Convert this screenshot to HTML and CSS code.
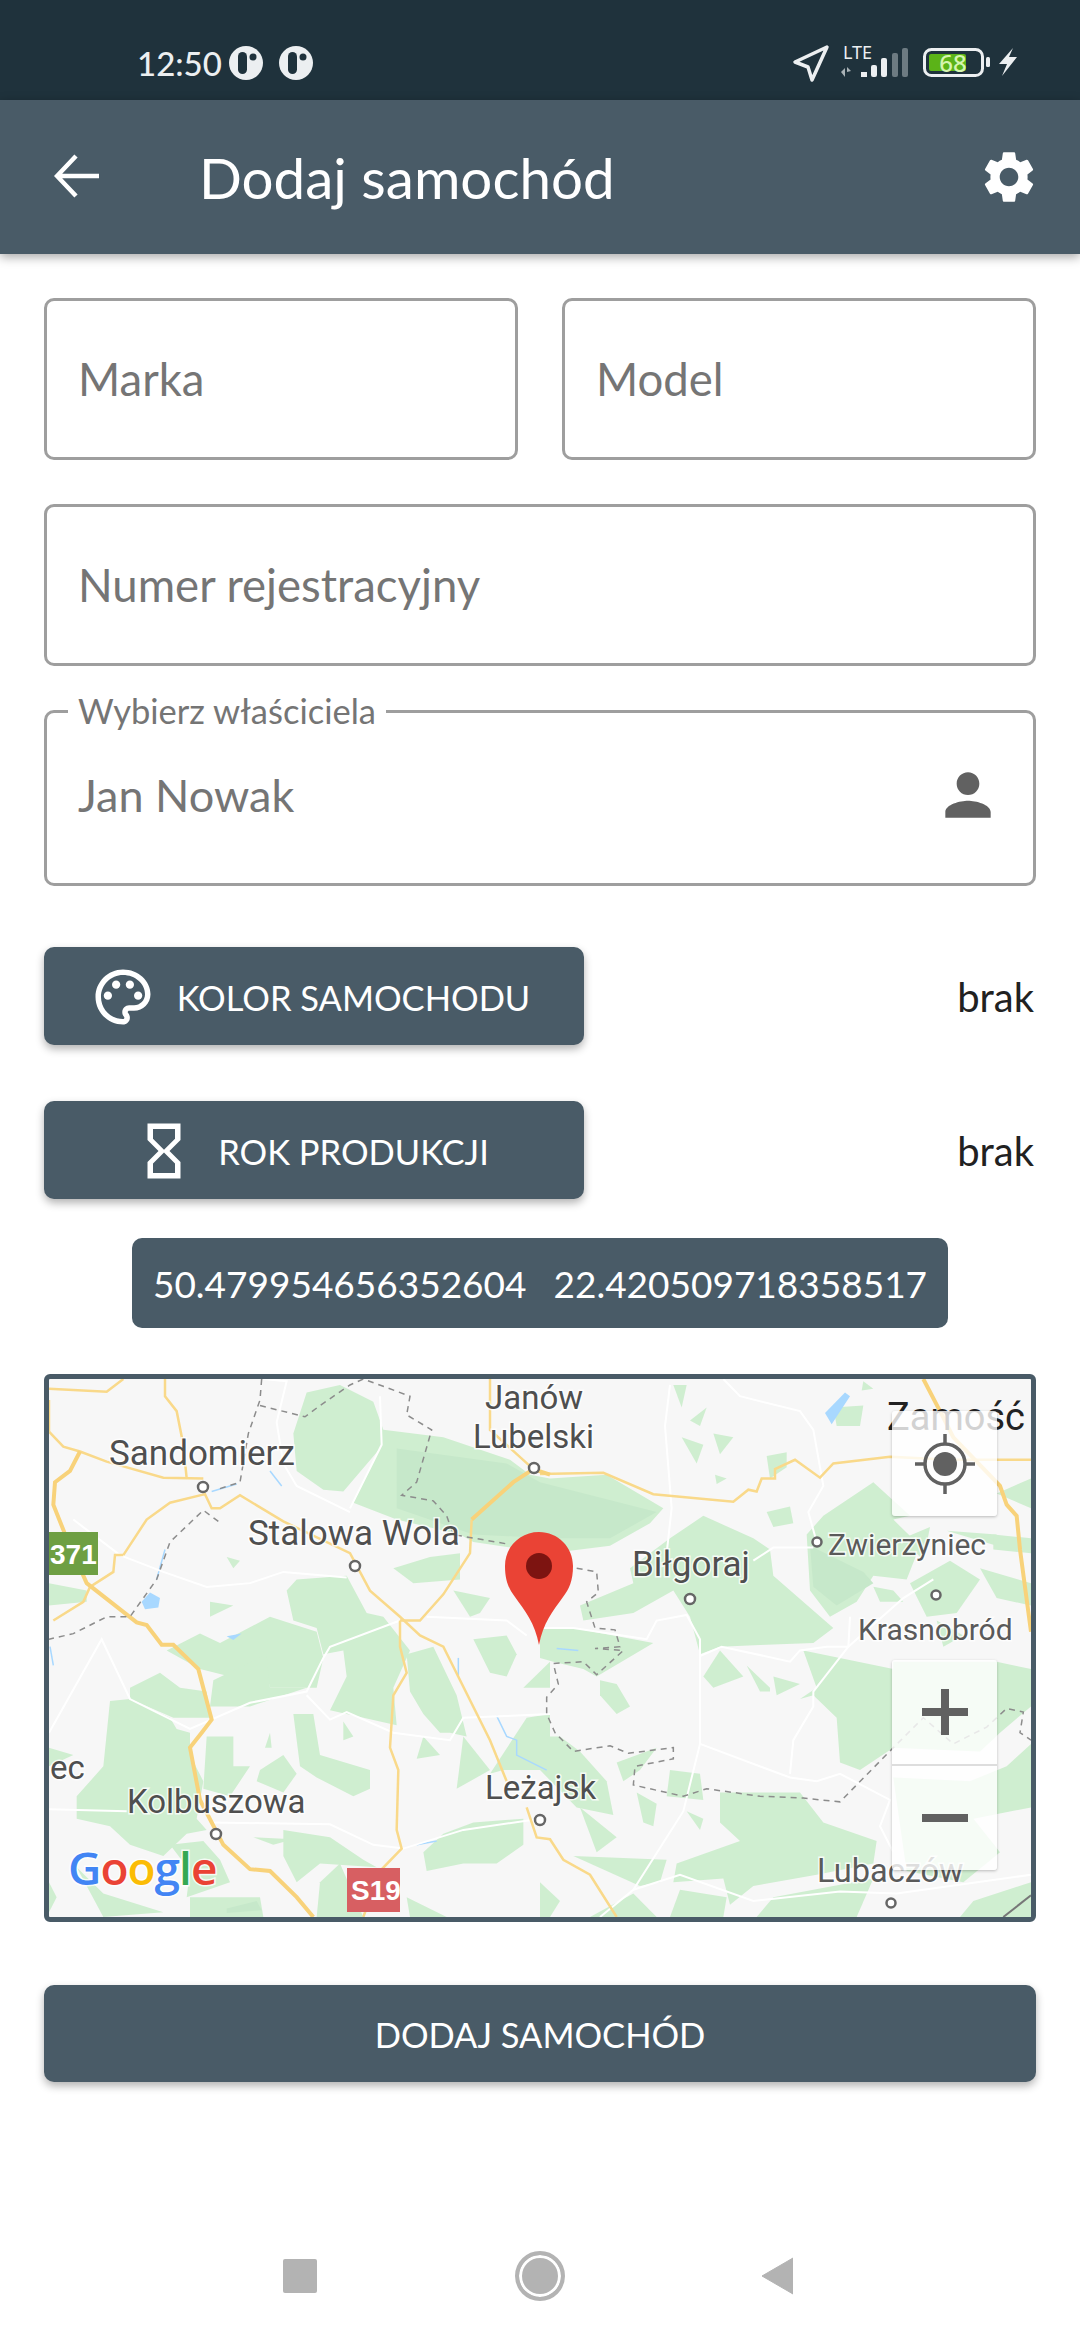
FILE: index.html
```html
<!DOCTYPE html>
<html>
<head>
  <title>Dodaj samochód</title>
  <link rel="stylesheet" href="styles.css">
</head>
<body>

  <div class="status-bar">
    <div class="status-left">
      <span class="clock">12:50</span>
      <svg class="status-dot first" viewBox="0 0 34 34"><circle cx="17" cy="17" r="17" fill="#eceff1"/><rect x="9" y="6" width="9" height="22" rx="4.5" fill="#1f323c"/><circle cx="24" cy="11" r="3.5" fill="#1f323c"/></svg>
      <svg class="status-dot" viewBox="0 0 34 34"><circle cx="17" cy="17" r="17" fill="#eceff1"/><rect x="9" y="6" width="9" height="22" rx="4.5" fill="#1f323c"/><circle cx="24" cy="11" r="3.5" fill="#1f323c"/></svg>
    </div>
    <svg class="status-right" viewBox="790 38 230 50">
      <path d="M827 47 795 62 808 67 812 80Z" fill="none" stroke="#eceff1" stroke-width="3.5" stroke-linejoin="round"/>
      <text x="843" y="59" class="lte">LTE</text>
      <path d="M841 72l4-4v9zM847 67l4 4-4 1z" fill="#a9b2b6"/>
      <rect x="861" y="72" width="6" height="5" fill="#eceff1"/>
      <rect x="871" y="65" width="6" height="12" rx="2" fill="#eceff1"/>
      <rect x="881" y="58" width="6" height="19" rx="2" fill="#eceff1"/>
      <rect x="892" y="53" width="6" height="24" rx="2" fill="#6d7b82"/>
      <rect x="902" y="48" width="6" height="29" rx="2" fill="#6d7b82"/>
      <rect x="924.500" y="49.500" width="58" height="26" rx="7" fill="none" stroke="#eceff1" stroke-width="3"/>
      <rect x="929" y="54" width="37" height="17" rx="2" fill="#5bb318"/>
      <text x="953" y="72" class="batt">68</text>
      <rect x="986" y="57" width="4" height="10" rx="1.500" fill="#eceff1"/>
      <path d="M1017 57h-8l4-9-14 16h8l-5 12z" fill="#eceff1"/>
    </svg>
  </div>

  <div class="app-bar">
    <svg class="back-icon" viewBox="0 0 46 44"><path d="M22 2 3 22 22 42M3 22H45" fill="none" stroke="#fff" stroke-width="4.500"/></svg>
    <h1 class="title">Dodaj samochód</h1>
    <svg class="gear-icon" viewBox="0 0 24 24"><path fill="#fff" d="M19.14 12.94c.04-.3.06-.61.06-.94 0-.32-.02-.64-.07-.94l2.03-1.58c.18-.14.23-.41.12-.61l-1.92-3.32c-.12-.22-.37-.29-.59-.22l-2.39.96c-.5-.38-1.03-.7-1.62-.94l-.36-2.54c-.04-.24-.24-.41-.48-.41h-3.84c-.24 0-.43.17-.47.41l-.36 2.54c-.59.24-1.13.57-1.62.94l-2.39-.96c-.22-.08-.47 0-.59.22L2.74 8.87c-.12.21-.08.47.12.61l2.03 1.58c-.05.3-.09.63-.09.94s.02.64.07.94l-2.03 1.58c-.18.14-.23.41-.12.61l1.92 3.32c.12.22.37.29.59.22l2.39-.96c.5.38 1.03.7 1.62.94l.36 2.54c.05.24.24.41.48.41h3.84c.24 0 .44-.17.47-.41l.36-2.54c.59-.24 1.13-.56 1.62-.94l2.39.96c.22.08.47 0 .59-.22l1.92-3.32c.12-.22.07-.47-.12-.61l-2.01-1.58zM12 15.6c-1.98 0-3.6-1.62-3.6-3.6s1.62-3.6 3.6-3.6 3.6 1.62 3.6 3.6-1.62 3.6-3.6 3.6z"/></svg>
  </div>

  <div class="content">
    <div class="field-row">
      <div class="field">Marka</div>
      <div class="field">Model</div>
    </div>
    <div class="field">Numer rejestracyjny</div>

    <fieldset class="owner">
      <legend>Wybierz właściciela</legend>
      <div class="owner-body">
        <span>Jan Nowak</span>
        <svg class="person-icon" viewBox="0 0 24 24"><path fill="#616161" d="M12 12c2.21 0 4-1.79 4-4s-1.79-4-4-4-4 1.79-4 4 1.79 4 4 4zm0 2c-2.67 0-8 1.34-8 4v2h16v-2c0-2.66-5.33-4-8-4z"/></svg>
      </div>
    </fieldset>

    <div class="pick-row first-pick">
      <button class="btn pick-btn">
        <svg class="btn-icon" viewBox="0 0 24 24"><path fill="#fff" d="M12 22C6.49 22 2 17.51 2 12S6.49 2 12 2s10 4.04 10 9c0 3.31-2.69 6-6 6h-1.77c-.28 0-.5.22-.5.5 0 .12.05.23.13.33.41.47.64 1.06.64 1.67 0 1.38-1.12 2.5-2.5 2.5zm0-18c-4.41 0-8 3.59-8 8s3.59 8 8 8c.28 0 .5-.22.5-.5 0-.16-.08-.28-.14-.35-.41-.46-.63-1.05-.63-1.65 0-1.38 1.12-2.5 2.5-2.5H16c2.21 0 4-1.79 4-4 0-3.86-3.59-7-8-7z"/><circle fill="#fff" cx="6.500" cy="11.500" r="1.500"/><circle fill="#fff" cx="9.500" cy="7.500" r="1.500"/><circle fill="#fff" cx="14.500" cy="7.500" r="1.500"/><circle fill="#fff" cx="17.500" cy="11.500" r="1.500"/></svg>
        KOLOR SAMOCHODU
      </button>
      <span class="pick-value">brak</span>
    </div>

    <div class="pick-row">
      <button class="btn pick-btn">
        <svg class="btn-icon" viewBox="0 0 24 24"><path fill="#fff" d="M6 2v6h.01L6 8.01 10 12l-4 4 .01.01H6V22h12v-5.99h-.01L18 16l-4-4 4-3.99-.01-.01H18V2H6zm10 14.5V20H8v-3.5l4-4 4 4zm-4-5l-4-4V4h8v3.5l-4 4z"/></svg>
        ROK PRODUKCJI
      </button>
      <span class="pick-value">brak</span>
    </div>

    <div class="coords"><span>50.479954656352604</span><span>22.420509718358517</span></div>

    <div class="map">
      <!-- ground layer: traced shapes, stretched to the box -->
      <svg class="map-ground" viewBox="57 54 2946 1439" preserveAspectRatio="none">
        <g class="forest">
          <polygon points="790,200 830,90 930,70 1030,115 1060,190 1240,210 1440,270 1500,310 1560,320 1730,310 1900,400 1860,440 1740,500 1560,520 1330,490 1290,470 1100,430 970,385 1050,240 940,355 880,350 800,300"/>
          <polygon points="240,915 300,910 420,960 440,990 480,1000 480,1060 520,1130 500,1230 530,1260 470,1270 400,1330 300,1300 240,1250 140,1230 140,1170 220,1090"/>
          <polygon points="770,620 800,590 950,580 1010,680 1060,690 1140,780 1090,880 1100,980 900,940 950,850 940,780 880,790 860,720 790,700"/>
          <polygon points="410,780 510,735 570,760 720,690 860,730 880,800 860,880 720,880 700,800 600,850 510,830"/>
          <polygon points="300,880 390,840 450,880 530,890 540,960 430,960 300,910"/>
          <polygon points="550,860 710,790 720,880 830,880 660,930 540,930"/>
          <polygon points="790,950 850,950 870,1060 1020,1100 1020,1150 970,1170 860,1120 810,1090"/>
          <polygon points="530,1010 610,1010 610,1090 660,1090 600,1170 520,1150"/>
          <polygon points="690,1100 760,1060 800,1110 760,1160 680,1130"/>
          <polygon points="1130,790 1210,770 1280,900 1310,1010 1260,1000 1230,1000 1180,950 1140,890"/>
          <polygon points="1180,1320 1240,1270 1330,1240 1480,1230 1480,1300 1400,1350 1300,1350 1190,1370"/>
          <polygon points="1330,750 1430,740 1460,790 1430,850 1380,840"/>
          <polygon points="1090,560 1200,530 1290,520 1290,590 1150,600"/>
          <polygon points="1270,620 1380,640 1350,680 1320,690"/>
          <polygon points="540,650 610,660 540,690"/>
          <polygon points="590,530 630,540 610,560"/>
          <polygon points="870,1400 930,1350 1000,1493 860,1493"/>
          <polygon points="1130,1440 1250,1493 1140,1493"/>
          <polygon points="1380,1110 1490,960 1560,950 1560,1100 1420,1100"/>
          <polygon points="57,600 170,620 170,650 57,660"/>
          <polygon points="57,1040 130,1060 57,1090"/>
          <polygon points="57,1400 80,1440 57,1480"/>
          <polygon points="480,1440 690,1440 700,1493 480,1493"/>
          <polygon points="140,1360 220,1430 400,1480 220,1493"/>
          <polygon points="1480,880 1560,810 1560,880"/>
          <polygon points="1180,1010 1230,1060 1160,1070"/>
          <polygon points="720,1000 725,1040 705,1040"/>
          <polygon points="940,970 970,1010 940,1020"/>
          <polygon points="1300,1010 1380,1100 1280,1150"/>
          <polygon points="420,1300 520,1290 570,1340 600,1400 470,1440 480,1370"/>
          <polygon points="670,1280 790,1285 730,1300"/>
          <polygon points="760,1260 900,1280 1000,1340 1040,1360 870,1350 800,1400 760,1330"/>
          <polygon points="1920,480 2020,420 2170,480 2220,510 2230,580 2410,720 2350,760 2070,770 2010,790 1980,690 1930,620 1810,680 1660,700 1650,660 1810,600 1800,560"/>
          <polygon points="2380,420 2530,330 2640,420 2590,430 2670,500 2630,590 2530,580 2480,650 2400,690 2340,620 2330,470"/>
          <polygon points="2020,850 2070,780 2140,850 2050,880"/>
          <polygon points="2150,820 2220,880 2220,890 2190,890"/>
          <polygon points="2230,850 2310,870 2240,900"/>
          <polygon points="2310,910 2360,880 2320,780 2590,830 2590,1040 2490,1100 2430,1080 2420,960 2350,900"/>
          <polygon points="1920,1100 2010,1110 2020,1180 1910,1170"/>
          <polygon points="2070,1160 2310,1160 2380,1240 2540,1290 2530,1350 2360,1380 2170,1410 2100,1460 2080,1390 1930,1400 1940,1350 2130,1290 2070,1240"/>
          <polygon points="2590,1120 2820,1130 2930,1090 3003,1030 3003,1200 2830,1230 2910,1320 2800,1400 2630,1370"/>
          <polygon points="2590,810 2900,810 3003,830 3003,930 2910,1000 2850,1050 2590,1040"/>
          <polygon points="1630,1330 1910,1340 1890,1400 1830,1410"/>
          <polygon points="1760,1080 1880,1040 1830,1100 1780,1130"/>
          <polygon points="1820,1160 1880,1190 1870,1250 1840,1240"/>
          <polygon points="1970,1210 2020,1230 2010,1260"/>
          <polygon points="1650,1200 1760,1280 1700,1320"/>
          <polygon points="1530,1010 1590,1010 1650,1050 1730,1130 1750,1220 1640,1200 1530,1100"/>
          <polygon points="1710,860 1760,870 1800,930 1760,950 1710,900"/>
          <polygon points="1530,720 1630,720 1870,760 1700,850 1660,830 1570,810 1530,800"/>
          <polygon points="1955,210 2020,230 2000,280"/>
          <polygon points="2050,200 2110,210 2070,255"/>
          <polygon points="2210,260 2270,250 2270,290 2220,320"/>
          <polygon points="2055,310 2090,320 2060,335"/>
          <polygon points="2210,410 2280,395 2290,440 2230,450"/>
          <polygon points="1930,70 1970,70 1955,130"/>
          <polygon points="2410,130 2500,125 2490,180 2420,180"/>
          <polygon points="2750,460 2900,470 2900,500"/>
          <polygon points="2530,610 2590,620 2620,650 2550,650"/>
          <polygon points="2750,630 2800,630 2780,610"/>
          <polygon points="2830,1450 3003,1400 3003,1493 2790,1493"/>
          <polygon points="1980,165 2030,130 2010,180"/>
          <polygon points="2500,60 2530,80 2495,85"/>
          <polygon points="1530,1400 1590,1450 1560,1493 1530,1493"/>
          <polygon points="1810,1430 1880,1493 1680,1493"/>
          <polygon points="1950,1420 2090,1440 2080,1493 1920,1493"/>
          <polygon points="2230,1440 2530,1390 2480,1493 2180,1493"/>
          <polygon points="2900,360 3003,320 3003,400"/>
          <polygon points="2620,480 2700,450 2680,540"/>
          <polygon points="2890,470 3003,480 3003,520 2890,510"/>
          <polygon points="2640,600 2760,540 2850,590 2780,680 2690,690"/>
          <polygon points="2850,560 3003,600 3003,660 2900,640"/>
          <polygon points="2720,700 2800,740 2740,770"/>
        </g>
        <polygon class="forest-dark" points="1100,240 1430,280 1530,330 1880,410 1740,480 1560,480 1330,470 1100,400"/>
        <polygon class="forest-dark" points="2340,500 2500,570 2530,600 2420,660 2350,610"/>
        <polygon class="forest-dark" points="590,1470 680,1450 695,1475 590,1482"/>

        <g class="water">
          <polygon points="335,650 360,625 390,640 385,665 345,670"/>
          <polygon points="590,742 635,735 610,752"/>
          <polygon points="2385,145 2445,90 2460,100 2405,175"/>
        </g>
        <g class="stream">
          <polyline points="405,510 380,590"/>
          <polyline points="545,355 620,335"/>
          <polyline points="720,300 755,340"/>
          <polyline points="1285,800 1285,850"/>
          <polyline points="1400,955 1430,1010 1460,1020 1460,1060 1550,1100"/>
          <polyline points="1580,775 1645,780"/>
          <polyline points="60,770 70,820"/>
          <polyline points="1160,1300 1220,1290"/>
        </g>

        <g class="road-white">
          <polyline points="130,430 270,525 400,570 530,610 660,600 760,570 950,585"/>
          <polyline points="57,1000 215,750 300,910 480,990 660,920 830,890 880,800 900,770 1110,700"/>
          <polyline points="830,900 900,965 950,945 1090,1000 1260,1020 1300,960 1560,950"/>
          <polyline points="57,1205 290,1210"/>
          <polyline points="540,1240 900,1245 1030,1300 1120,1310 1300,1260 1530,1230"/>
          <polyline points="700,54 770,60 740,170 760,280 800,340 960,410"/>
          <polyline points="1050,100 1055,230 960,400"/>
          <polyline points="1190,690 1430,700 1490,740"/>
          <polyline points="1530,720 1630,720 1850,750 1880,700 1970,685 2010,750 2010,1030 1960,1210 1810,1420 1710,1493"/>
          <polyline points="2010,795 2075,770 2280,810 2310,780 2390,770 2455,770 2620,640 2710,590"/>
          <polyline points="2460,690 2455,770 2350,890 2350,930 2290,1020 2280,1110"/>
          <polyline points="2010,1030 2280,1120 2360,1130 2430,1110 2580,1180 2550,1250 2590,1320"/>
          <polyline points="1810,1420 1950,1380 2170,1450 2430,1425 2600,1430 3003,1380"/>
          <polyline points="2080,54 2130,100 2310,140 2350,190 2380,340 2335,410 2360,490"/>
          <polyline points="1920,70 1905,180 1925,400 1910,520"/>
          <polyline points="2170,540 2230,505 2350,505"/>
        </g>

        <g class="road-yellow">
          <polyline points="57,80 230,88 280,54"/>
          <polyline points="405,54 405,100 440,140 460,230 470,320"/>
          <polyline points="57,195 100,235 150,248 230,275 400,318 520,320"/>
          <polyline points="57,110 57,195"/>
          <polyline points="1380,54 1380,190 1510,295"/>
          <polyline points="280,525 350,430 420,385 525,362 545,400 570,400 630,365 760,435 960,520 1020,620 1110,690 1170,740 1240,770 1380,1020 1430,1130"/>
          <polyline points="280,525 255,525 250,570 180,610 160,650 70,700"/>
          <polyline points="1110,700 1110,770 1130,840 1090,900 1080,1040 1105,1100 1100,1260 1115,1310 1050,1370 1000,1493"/>
          <polyline points="1110,700 1170,700 1240,630 1320,520 1325,430"/>
          <polyline points="1490,1200 1520,1280 1560,1285 1600,1340 1680,1380 1760,1493"/>
          <polyline points="1530,308 1720,305 1870,362 2110,382 2155,350 2180,355 2195,320 2235,320 2235,295 2295,270 2370,318 2410,280 2580,262 2760,270 3003,270"/>
        </g>
        <g class="road-wide">
          <polyline points="150,248 120,300 75,330 70,390 110,480 170,600 320,705 350,712 395,765 430,765 505,830 545,965 515,1000 480,1040 510,1180 580,1300 660,1365 720,1370 800,1440 850,1493"/>
          <polyline points="1325,430 1450,330 1510,295 1560,310"/>
          <polyline points="2680,54 2730,140 2770,210 2910,340 2930,390 2960,420 2970,510 3003,730"/>
        </g>

        <g class="border-dash">
          <polyline points="695,54 690,110 655,200 630,330 560,350"/>
          <polyline points="690,125 825,155 870,125 960,70 1000,54 1140,100 1130,150 1205,190 1160,330 1115,365 1210,380 1250,420 1270,470 1430,495"/>
          <polyline points="565,435 520,405 420,490 380,590 300,690 230,690 130,735 57,750"/>
          <polyline points="1640,560 1700,570 1705,625 1670,650 1695,720 1755,725 1770,770 1695,775 1780,780 1700,845 1660,810 1570,815 1585,870 1550,905 1550,950 1575,1000 1630,1050 1740,1035 1795,1055 1930,1040 1930,1070 1815,1090 1810,1140 1960,1170 2030,1150 2190,1170 2320,1175 2430,1185 2590,1040 2680,960 2770,1030 2870,985 2930,935 2980,945 2970,1000 3003,1020"/>
        </g>
        <polyline class="rail" points="2920,1493 3003,1435"/>
      </svg>

      <!-- labels and markers, in screen pixels -->
      <svg class="map-labels" viewBox="49 1380 982 535">
        <g class="town-dots">
          <circle cx="203" cy="1488" r="5"/>
          <circle cx="355" cy="1567" r="5"/>
          <circle cx="534" cy="1469" r="5"/>
          <circle cx="216" cy="1835" r="5"/>
          <circle cx="540" cy="1821" r="5"/>
          <circle cx="690" cy="1600" r="5"/>
          <circle cx="817" cy="1543" r="4.500"/>
          <circle cx="936" cy="1596" r="4.500"/>
          <circle cx="891" cy="1904" r="4.500"/>
        </g>
        <g class="map-text">
          <text x="109" y="1466" class="big">Sandomierz</text>
          <text x="248" y="1546" class="big">Stalowa Wola</text>
          <text x="485" y="1410">Janów</text>
          <text x="473" y="1449">Lubelski</text>
          <text x="50" y="1780">ec</text>
          <text x="127" y="1814">Kolbuszowa</text>
          <text x="485" y="1800">Leżajsk</text>
          <text x="632" y="1577" class="big">Biłgoraj</text>
          <text x="828" y="1556" class="small">Zwierzyniec</text>
          <text x="858" y="1641" class="small">Krasnobród</text>
          <text x="817" y="1883" class="mid">Lubaczów</text>
          <text x="887" y="1431" class="dark">Zamość</text>
        </g>

        <rect x="49" y="1533" width="49" height="43" fill="#6e9f43"/>
        <text x="50" y="1565" class="shield">371</text>
        <rect x="347" y="1869" width="53" height="44" fill="#d75f62"/>
        <text x="351" y="1901" class="shield">S19</text>

        <text x="68" y="1886" class="google"><tspan fill="#4285f4">G</tspan><tspan fill="#ea4335">o</tspan><tspan fill="#fbbc05">o</tspan><tspan fill="#4285f4">g</tspan><tspan fill="#34a853">l</tspan><tspan fill="#ea4335">e</tspan></text>

        <path d="M539 1646c-4-22-14-34-24-48-6-8-10-16-10-31 0-19 15-34 34-34s34 15 34 34c0 15-4 23-10 31-10 14-20 26-24 48z" fill="#ea4335"/>
        <circle cx="539" cy="1567" r="13" fill="#7d1411"/>
      </svg>

      <div class="map-control locate">
        <svg viewBox="0 0 60 60"><circle cx="30" cy="30" r="20" fill="none" stroke="#616161" stroke-width="3.500"/><circle cx="30" cy="30" r="12" fill="#616161"/><path d="M30 0v11M30 49v11M0 30h11M49 30h11" stroke="#616161" stroke-width="3.500"/></svg>
      </div>
      <div class="map-control zoom">
        <div class="zoom-step"><svg viewBox="0 0 46 46"><path d="M0 19h46v8H0zM19 0h8v46h-8z" fill="#616161"/></svg></div>
        <div class="zoom-step"><svg viewBox="0 0 46 46"><path d="M0 19h46v8H0z" fill="#616161"/></svg></div>
      </div>
    </div>

    <button class="btn submit">DODAJ SAMOCHÓD</button>
  </div>

  <div class="nav-bar">
    <span class="nav-square"></span>
    <span class="nav-circle"></span>
    <svg class="nav-back" viewBox="0 0 32 38"><path d="M32 1v36L1 19z" fill="#b3b3b3" stroke="#b3b3b3" stroke-width="1" stroke-linejoin="round"/></svg>
  </div>

</body>
</html>
```

FILE: styles.css
```css
* {
  box-sizing: border-box;
}
body {
  font-family: Lato, "Noto Sans", sans-serif;
  margin: 0;
  width: 1080px;
  height: 2340px;
  display: flex;
  flex-direction: column;
  background-color: #fff;
  overflow: hidden;
}

/* status bar */
.status-bar {
  height: 100px;
  background-color: #1f323c;
  display: flex;
  align-items: center;
  justify-content: space-between;
  padding: 26px 60px 0 137px;
  flex-shrink: 0;
}
.status-left {
  display: flex;
  align-items: center;
}
.clock {
  font-size: 33px;
  font-weight: 500;
  color: #eceff1;
  width: 92px;
}
.status-dot {
  width: 34px;
  height: 34px;
  margin-left: 16px;
}
.status-dot.first {
  margin-left: 0;
}
.status-right {
  width: 230px;
  height: 50px;
}
.lte {
  font-family: "Noto Sans", sans-serif;
  font-size: 18px;
  fill: #eceff1;
}
.batt {
  font-family: "Noto Sans", sans-serif;
  font-size: 24px;
  font-weight: 500;
  fill: #d5f5b0;
  text-anchor: middle;
}

/* app bar */
.app-bar {
  height: 154px;
  background-color: #495b67;
  box-shadow: 0 3px 10px rgba(0, 0, 0, 0.35);
  display: flex;
  align-items: center;
  padding: 0 40px 0 54px;
  flex-shrink: 0;
  position: relative;
}
.back-icon {
  width: 46px;
  height: 44px;
  margin-top: -2px;
}
.title {
  flex: 1;
  margin: 0 0 0 99px;
  font-size: 56.5px;
  font-weight: 400;
  color: #fff;
}
.gear-icon {
  width: 62px;
  height: 62px;
}

/* form */
.content {
  display: flex;
  flex-direction: column;
  padding: 44px 44px 0;
}
.field-row {
  display: flex;
  gap: 44px;
  margin-bottom: 44px;
}
.field {
  flex: 1 0 162px;
  height: 162px;
  border: 3px solid #9e9e9e;
  border-radius: 10px;
  padding: 0 31px 2px;
  display: flex;
  align-items: center;
  font-size: 45.5px;
  color: #757575;
}
.owner {
  margin: 25px 0 0;
  padding: 0 31px;
  height: 195px;
  flex-shrink: 0;
  border: 3px solid #9e9e9e;
  border-radius: 10px;
  color: #757575;
}
.owner legend {
  font-size: 34.5px;
  line-height: 40px;
  padding: 0 10px;
  margin-left: -10px;
  color: #757575;
}
.owner-body {
  height: 128px;
  display: flex;
  align-items: center;
  justify-content: space-between;
  font-size: 45px;
}
.person-icon {
  width: 68px;
  height: 68px;
}

.btn {
  border: none;
  border-radius: 10px;
  background-color: #495b67;
  color: #fff;
  font-family: inherit;
  font-size: 34.5px;
  box-shadow: 0 4px 8px rgba(0, 0, 0, 0.3);
  display: flex;
  align-items: center;
  justify-content: center;
  padding: 2px 0 0;
  flex-shrink: 0;
}
.pick-row {
  display: flex;
  align-items: center;
  justify-content: space-between;
  margin-top: 56px;
}
.first-pick {
  margin-top: 61px;
}
.pick-btn {
  width: 540px;
  height: 98px;
  gap: 21px;
  padding-right: 8px;
}
.btn-icon {
  width: 66px;
  height: 66px;
}
.pick-value {
  font-size: 40px;
  color: #212121;
  padding: 2px 2px 0 0;
}
.coords {
  align-self: center;
  width: 816px;
  height: 90px;
  margin-top: 39px;
  border-radius: 10px;
  background-color: #495b67;
  color: #fff;
  font-size: 37px;
  display: flex;
  align-items: center;
  justify-content: center;
  gap: 27px;
}

/* map */
.map {
  position: relative;
  flex: 0 0 548px;
  margin-top: 46px;
  border: 5px solid #495b67;
  border-radius: 6px;
  overflow: hidden;
  background-color: #f7f7f7;
}
.map-ground,
.map-labels {
  position: absolute;
  left: 0;
  top: 0;
  width: 982px;
  height: 538px;
}
.map-labels {
  height: 535px;
}
.map-ground {
  filter: blur(0.6px);
}
.forest polygon {
  fill: #cfeed0;
}
.forest-dark {
  fill: #c6e8ca;
}
.water polygon {
  fill: #a8d8ff;
}
.stream polyline {
  fill: none;
  stroke: #a8d8ff;
  stroke-width: 1.5;
  vector-effect: non-scaling-stroke;
}
.road-white polyline {
  fill: none;
  stroke: #fff;
  stroke-width: 2;
  vector-effect: non-scaling-stroke;
}
.road-yellow polyline {
  fill: none;
  stroke: #f9d98a;
  stroke-width: 2.5;
  vector-effect: non-scaling-stroke;
}
.road-wide polyline {
  fill: none;
  stroke: #f8d27a;
  stroke-width: 4;
  vector-effect: non-scaling-stroke;
}
.border-dash polyline {
  fill: none;
  stroke: #8c8c8c;
  stroke-width: 1.5;
  stroke-dasharray: 6 5;
  vector-effect: non-scaling-stroke;
}
.rail {
  fill: none;
  stroke: #777;
  stroke-width: 2;
  vector-effect: non-scaling-stroke;
}
.town-dots circle {
  fill: #fff;
  stroke: #666;
  stroke-width: 2.5;
}
.map-text text {
  font-family: Roboto, sans-serif;
  font-size: 33px;
  fill: #4f4f4f;
  stroke: rgba(255, 255, 255, 0.8);
  stroke-width: 3px;
  paint-order: stroke;
}
.map-text .big {
  font-size: 35px;
}
.map-text .small {
  font-size: 30px;
  fill: #5a5a5a;
}
.map-text .mid {
  font-size: 32.5px;
  fill: #5a5a5a;
}
.map-text .dark {
  font-size: 38px;
  fill: #222;
  stroke: none;
}
.shield {
  font-family: "Liberation Sans", sans-serif;
  font-weight: 700;
  font-size: 28px;
  fill: #fff;
}
.google {
  font-family: "Open Sans", sans-serif;
  font-size: 46px;
  font-weight: 600;
  letter-spacing: -1px;
  stroke: rgba(255, 255, 255, 0.8);
  stroke-width: 3px;
  paint-order: stroke;
}
.map-control {
  position: absolute;
  left: 843px;
  width: 105px;
  background-color: rgba(255, 255, 255, 0.8);
  border-radius: 3px;
  box-shadow: 0 1px 3px rgba(0, 0, 0, 0.25);
  display: flex;
  flex-direction: column;
}
.locate {
  top: 32px;
  height: 105px;
  align-items: center;
  justify-content: center;
}
.locate svg {
  width: 60px;
  height: 60px;
}
.zoom {
  top: 281px;
  height: 210px;
}
.zoom-step {
  flex: 1;
  display: flex;
  align-items: center;
  justify-content: center;
}
.zoom-step + .zoom-step {
  border-top: 2px solid #ddd;
}
.zoom-step svg {
  width: 46px;
  height: 46px;
}

.submit {
  height: 97px;
  margin-top: 63px;
}

/* navigation bar */
.nav-bar {
  flex: 1;
  display: flex;
  align-items: center;
  justify-content: center;
  padding: 130px 4px 0 0;
}
.nav-square {
  width: 34px;
  height: 34px;
  background-color: #b3b3b3;
  border-radius: 2px;
  margin-right: 198px;
}
.nav-circle {
  width: 50px;
  height: 50px;
  border-radius: 50%;
  background-color: #b3b3b3;
  border: 4px solid #b3b3b3;
  box-shadow: inset 0 0 0 3px #fff;
  margin-right: 196px;
}
.nav-back {
  width: 32px;
  height: 38px;
}
```
